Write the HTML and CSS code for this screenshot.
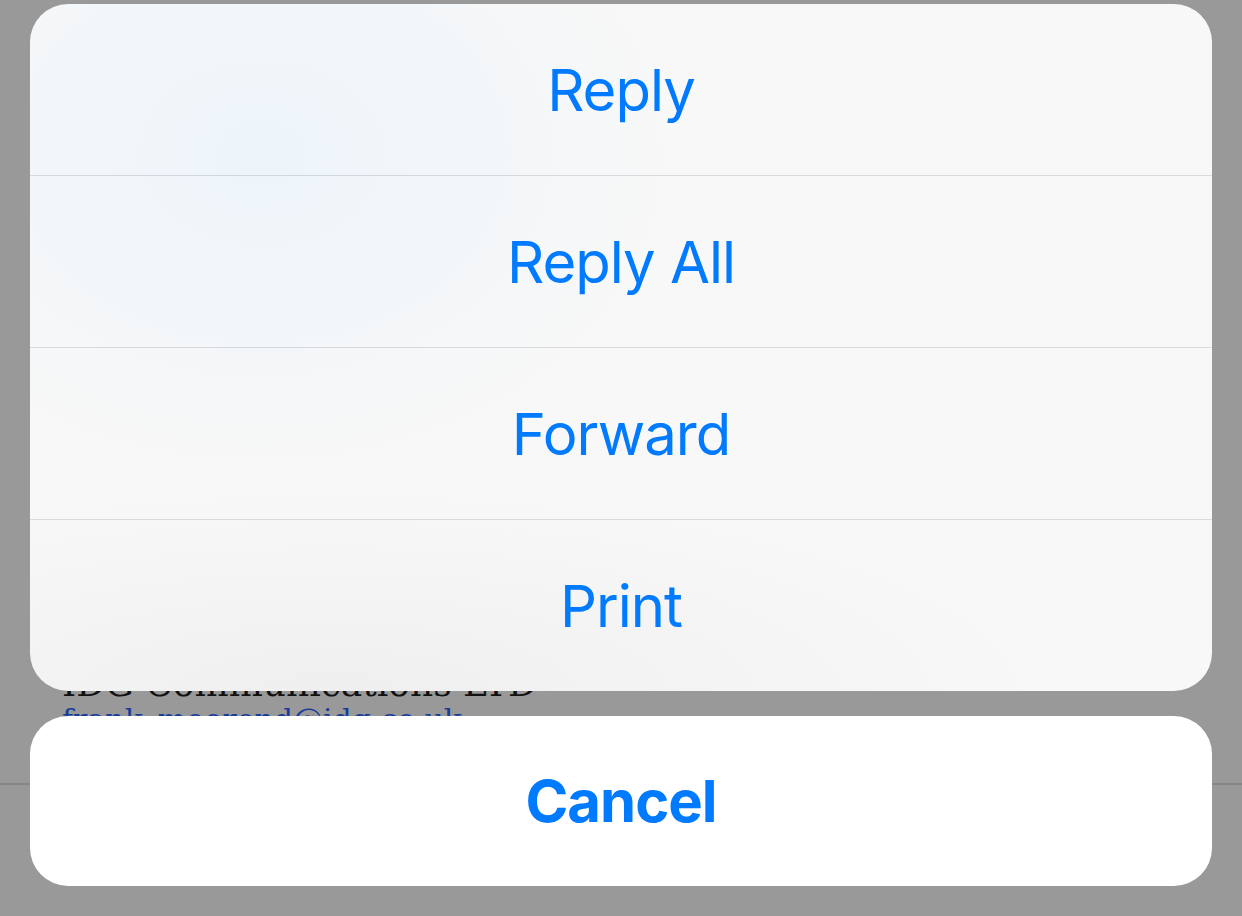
FILE: index.html
```html
<!DOCTYPE html>
<html lang="en">
<head>
<meta charset="utf-8">
<title>Action sheet</title>
<link rel="stylesheet" href="styles.css">
</head>
<body>
<div class="page">
  <p class="line top-line">IDG Communications LTD</p>
  <div class="spacer"></div>
  <p class="line company">IDG Communications LTD</p>
  <p class="line link">frank_moorend@idg.co.uk</p>
  <div class="toolbar"></div>
</div>
<div class="overlay">
  <div class="sheet">
    <div class="action">Reply</div>
    <div class="action">Reply All</div>
    <div class="action">Forward</div>
    <div class="action">Print</div>
  </div>
  <div class="cancel">Cancel</div>
</div>
</body>
</html>
```
FILE: styles.css
```css
html, body {
  margin: 0;
  padding: 0;
  width: 1242px;
  height: 916px;
  overflow: hidden;
  background: #999999;
}
.page {
  display: flex;
  flex-direction: column;
  padding: 0 0 0 62px;
  height: 916px;
  box-sizing: border-box;
}
.line {
  margin: 0;
  font-family: "DejaVu Serif", "Liberation Serif", serif;
  font-size: 36px;
  line-height: 36px;
  height: 36px;
  flex: none;
  color: #111;
  white-space: nowrap;
}
.top-line {
  margin-top: -32px;
}
.spacer {
  height: 662px;
  flex: none;
}
.link {
  color: #1a3d9a;
  font-size: 30px;
  margin-top: 0;
}
.toolbar {
  flex: none;
  margin-left: -62px;
  margin-top: 45px;
  height: 2px;
  background: #878787;
}
.overlay {
  position: absolute;
  left: 0;
  top: 0;
  width: 1242px;
  height: 916px;
  box-sizing: border-box;
  padding: 4px 30px 0 30px;
  display: flex;
  flex-direction: column;
  gap: 25px;
}
.sheet {
  border-radius: 38px;
  overflow: hidden;
  display: flex;
  flex-direction: column;
  background:
    radial-gradient(ellipse 420px 320px at 230px 150px, rgba(236, 244, 250, 0.9), rgba(240, 244, 247, 0) 100%),
    radial-gradient(ellipse 700px 200px at 300px 690px, rgba(238, 238, 238, 0.9), rgba(240, 240, 240, 0) 100%),
    #f8f8f8;
}
.action {
  height: 171px;
  display: flex;
  align-items: center;
  justify-content: center;
  font-family: Inter, "Noto Sans", sans-serif;
  font-size: 58px;
  font-weight: 400;
  color: #007aff;
  letter-spacing: -1px;
}
.action + .action {
  border-top: 1px solid rgba(60, 70, 90, 0.16);
}
.cancel {
  height: 170px;
  border-radius: 38px;
  background: #ffffff;
  display: flex;
  align-items: center;
  justify-content: center;
  font-family: Inter, "Noto Sans", sans-serif;
  font-size: 58px;
  font-weight: 700;
  color: #007aff;
  letter-spacing: -1px;
}
```
